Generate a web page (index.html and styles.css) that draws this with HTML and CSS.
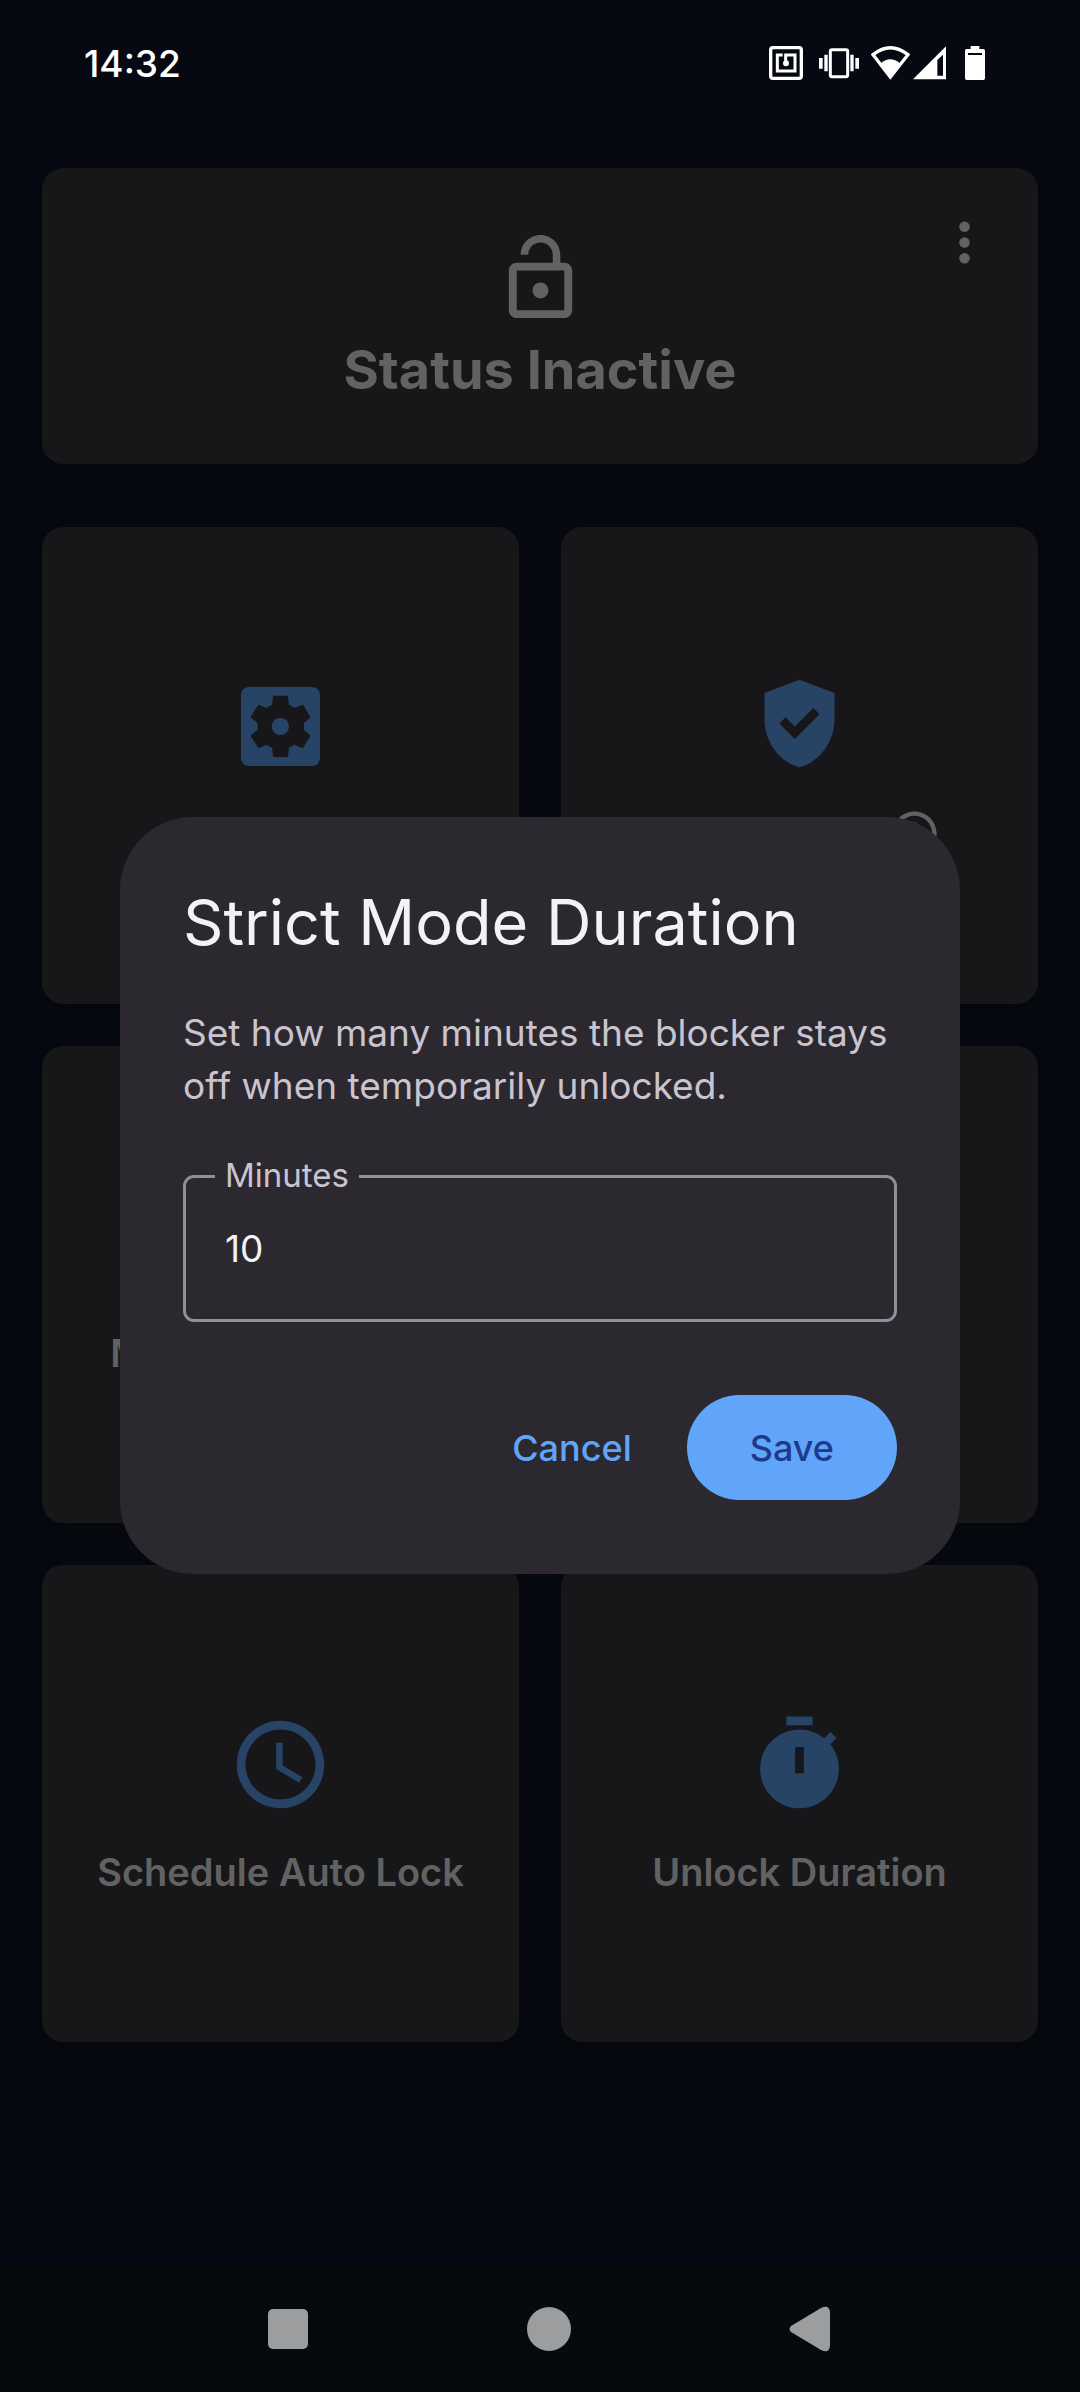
FILE: index.html
```html
<!DOCTYPE html>
<html lang="en">
<head>
<meta charset="utf-8">
<meta name="viewport" content="width=device-width, initial-scale=1">
<title>Strict Mode Duration</title>
<link rel="stylesheet" href="styles.css">
</head>
<body>
<div class="screen">
  <header class="status-bar">
    <time class="clock">14:32</time>
    <div class="status-icons" aria-hidden="true">
      <svg width="38" height="36" viewBox="87 75 114 108" fill="none" stroke="#fff">
        <rect x="92" y="83" width="92" height="92" rx="7" stroke-width="10"/>
        <path d="M128 105H112V153H165V105H137V127" stroke-width="9"/>
        <circle cx="138" cy="130" r="9" fill="#fff" stroke="none"/>
      </svg>
      <svg width="40" height="36" viewBox="237 75 120 108" fill="#fff">
        <rect x="271" y="89" width="52" height="81" rx="5" fill="none" stroke="#fff" stroke-width="9"/>
        <path d="M237 114h11v32h-11zM253 104h10v50h-10zM331 104h10v50h-10zM346 114h11v32h-11z"/>
      </svg>
      <div class="signal">
        <svg width="39" height="36" viewBox="393 75 117 108">
          <path d="M399 104Q451 62 504 104L451 171Z" fill="none" stroke="#fff" stroke-width="10"/>
          <path d="M422 130Q451 106 480 130L451 176Z" fill="#fff"/>
        </svg>
        <svg width="33" height="36" viewBox="519 75 99 108" fill="#fff">
          <path fill-rule="evenodd" d="M519 178L618 79V178ZM592 120V167H609V104Z"/>
        </svg>
      </div>
      <svg width="27" height="36" viewBox="654 75 81 108" fill="#fff">
        <path fill-rule="evenodd" d="M692 78h26v9h12q5 0 5 5v83q0 5-5 5h-50q-5 0-5-5v-83q0-5 5-5h12zM684 99v6h42v-6z"/>
      </svg>
    </div>
  </header>

  <main class="content">
    <section class="card status-card">
      <svg class="status-icon" viewBox="0 0 24 24" aria-hidden="true"><path d="M12 17c1.1 0 2-.9 2-2s-.9-2-2-2-2 .9-2 2 .9 2 2 2zm6-9h-1V6c0-2.76-2.24-5-5-5S7 3.24 7 6h1.9c0-1.71 1.39-3.1 3.1-3.1 1.71 0 3.1 1.39 3.1 3.1v2H6c-1.1 0-2 .9-2 2v10c0 1.1.9 2 2 2h12c1.1 0 2-.9 2-2V10c0-1.1-.9-2-2-2zm0 12H6V10h12v10z"/></svg>
      <h1 class="status-title">Status Inactive</h1>
      <button class="menu-button" type="button" aria-label="More options">
        <svg viewBox="0 0 24 24"><circle cx="12" cy="6" r="2"/><circle cx="12" cy="12" r="2"/><circle cx="12" cy="18" r="2"/></svg>
      </button>
    </section>

    <div class="tiles">
      <button class="card tile" type="button" aria-label="Settings">
        <svg class="tile-icon" viewBox="0 0 315 315"><path fill-rule="evenodd" d="M65 39H250Q276 39 276 65V250Q276 276 250 276H65Q39 276 39 250V65Q39 39 65 39ZM137 65Q135 65 135 67L132 92 115 102 94 93Q91 92 90 94L69 127Q67 130 70 132L89 147V167L70 182Q67 185 69 188L90 220Q91 223 94 222L115 212 132 221 135 247Q135 249 137 249H178Q180 249 180 247L183 221 200 212 222 222Q225 223 226 220L246 188Q248 185 245 182L228 167V147L245 132Q248 130 246 127L226 94Q225 92 222 93L200 102 183 92 180 67Q180 65 178 65Z"/><circle cx="157" cy="157" r="26"/></svg>
        <span class="tile-label"></span>
      </button>
      <button class="card tile" type="button">
        <svg class="tile-icon" viewBox="0 0 24 24"><path d="M12 2L4 5v6.09c0 5.05 3.41 9.76 8 10.91 4.59-1.15 8-5.86 8-10.91V5l-8-3zm-1.06 13.54L7.4 12l1.41-1.41 2.12 2.12 4.24-4.24 1.41 1.41-5.64 5.66z"/></svg>
        <span class="tile-label">Strict Mode
          <svg class="info-icon" viewBox="0 0 24 24"><path d="M11 7h2v2h-2zm0 4h2v6h-2zm1-9C6.48 2 2 6.48 2 12s4.48 10 10 10 10-4.48 10-10S17.52 2 12 2zm0 18c-4.41 0-8-3.59-8-8s3.59-8 8-8 8 3.59 8 8-3.59 8-8 8z"/></svg>
        </span>
      </button>
      <button class="card tile" type="button">
        <span class="tile-icon"></span>
        <span class="tile-label">Manage Keywords</span>
      </button>
      <button class="card tile" type="button" aria-label="Tile"></button>
      <button class="card tile" type="button">
        <svg class="tile-icon" viewBox="0 0 24 24"><path d="M11.99 2C6.47 2 2 6.48 2 12s4.47 10 9.99 10C17.52 22 22 17.52 22 12S17.52 2 11.99 2zM12 20c-4.42 0-8-3.58-8-8s3.58-8 8-8 8 3.58 8 8-3.58 8-8 8zm.5-13H11v6l5.25 3.15.75-1.23-4.5-2.67z"/></svg>
        <span class="tile-label">Schedule Auto Lock</span>
      </button>
      <button class="card tile" type="button">
        <svg class="tile-icon" viewBox="0 0 24 24"><path d="M9 1h6v2H9zM19.03 7.39l1.42-1.42c-.43-.51-.9-.99-1.41-1.41l-1.42 1.42C16.07 4.74 14.12 4 12 4c-4.97 0-9 4.03-9 9s4.02 9 9 9 9-4.03 9-9c0-2.12-.74-4.07-1.97-5.61zM13 14h-2V8h2v6z"/></svg>
        <span class="tile-label">Unlock Duration</span>
      </button>
    </div>
  </main>

  <nav class="nav-bar">
    <button class="nav-button" type="button" aria-label="Recent apps"><svg width="48" height="48" viewBox="0 0 48 48"><rect x="4" y="4" width="40" height="40" rx="5"/></svg></button>
    <button class="nav-button" type="button" aria-label="Home"><svg width="48" height="48" viewBox="0 0 48 48"><circle cx="24" cy="24" r="22"/></svg></button>
    <button class="nav-button" type="button" aria-label="Back"><svg width="48" height="48" viewBox="0 0 48 48"><path d="M5 21Q2 24 5 27L35 45Q43 49 44 41V7Q43-1 35 3Z"/></svg></button>
  </nav>
</div>

<div class="overlay">
  <form class="dialog" role="dialog" aria-modal="true" aria-labelledby="dialog-title">
    <h2 class="dialog-title" id="dialog-title">Strict Mode Duration</h2>
    <p class="dialog-text">Set how many minutes the blocker stays off when temporarily unlocked.</p>
    <div class="field">
      <label class="field-label" for="minutes">Minutes</label>
      <input class="field-input" id="minutes" type="text" inputmode="numeric" value="10">
    </div>
    <div class="actions">
      <button class="button button-text" type="button">Cancel</button>
      <button class="button button-filled" type="submit">Save</button>
    </div>
  </form>
</div>
</body>
</html>
```
FILE: styles.css
```css
:root {
  --background: #060911;
  --card: #171719;
  --muted: #626262;
  --tile-accent: #274365;
  --surface: #2b292f;
  --accent: #60a5fa;
}

* {
  box-sizing: border-box;
}

body {
  margin: 0;
  background: var(--background);
  color: #fff;
  font-family: Inter, Roboto, sans-serif;
  font-size: 37px;
}

button,
input {
  font: inherit;
  margin: 0;
}

button {
  border: 0;
  padding: 0;
  background: none;
}

svg {
  display: block;
}

h1,
h2,
p {
  margin: 0;
}

.screen {
  display: flex;
  flex-direction: column;
  min-height: 100vh;
}

.status-bar {
  display: flex;
  align-items: center;
  justify-content: space-between;
  height: 126px;
  padding: 0 95px 0 84px;
}

.clock {
  font-weight: 500;
}

.status-icons {
  display: flex;
  gap: 12px;
}

.signal {
  display: flex;
  gap: 3px;
}

.content {
  display: flex;
  flex-direction: column;
  gap: 63px;
  padding: 42px;
}

.card {
  border-radius: 21px;
  background: var(--card);
  color: var(--muted);
  box-shadow: 0 4px 16px rgba(6, 8, 10, 0.9);
}

.status-card {
  position: relative;
  display: flex;
  flex-direction: column;
  align-items: center;
  gap: 12px;
  padding: 63px;
}

.status-icon {
  width: 95px;
  height: 95px;
  fill: currentColor;
}

.status-title {
  font-size: 54px;
  line-height: 63px;
  font-weight: 700;
}

.menu-button {
  position: absolute;
  top: 11px;
  right: 10px;
  padding: 32px;
  color: inherit;
}

.menu-button svg {
  width: 63px;
  height: 63px;
  fill: currentColor;
}

.tiles {
  display: grid;
  grid-template-columns: 1fr 1fr;
  gap: 42px;
}

.tile {
  display: flex;
  flex-direction: column;
  align-items: center;
  justify-content: center;
  gap: 31px;
  aspect-ratio: 1;
}

.tile-icon {
  width: 105px;
  height: 105px;
  fill: var(--tile-accent);
}

.tile-label {
  display: flex;
  align-items: center;
  gap: 16px;
  min-height: 48px;
  font-size: 38px;
  line-height: 48px;
  font-weight: 600;
}

.info-icon {
  width: 53px;
  height: 53px;
  fill: currentColor;
}

.nav-bar {
  display: flex;
  align-items: center;
  justify-content: center;
  gap: 213px;
  height: 126px;
  margin-top: auto;
  padding-left: 17px;
  background: #060a0c;
}

.nav-button svg {
  fill: #9c9d9f;
}

.overlay {
  position: fixed;
  inset: 0;
  display: flex;
  align-items: center;
  justify-content: center;
  padding: 0 120px 2px;
}

.dialog {
  width: 100%;
  padding: 63px;
  border-radius: 73px;
  background: var(--surface);
}

.dialog-title {
  margin-bottom: 42px;
  color: #f3f3f6;
  font-size: 63px;
  line-height: 84px;
  font-weight: 400;
}

.dialog-text {
  margin-bottom: 63px;
  color: #cac4d0;
  line-height: 53px;
}

.field {
  position: relative;
  margin-bottom: 63px;
}

.field-label {
  position: absolute;
  top: -21px;
  left: 32px;
  padding: 0 10px;
  background: var(--surface);
  color: #cac4d0;
  font-size: 33px;
  line-height: 42px;
}

.field-input {
  display: block;
  width: 100%;
  height: 147px;
  padding: 0 39px;
  border: 3px solid #938f99;
  border-radius: 11px;
  outline: 0;
  background: none;
  color: #f3f3f6;
}

.actions {
  display: flex;
  align-items: center;
  justify-content: flex-end;
  gap: 21px;
  height: 126px;
}

.button {
  height: 105px;
  border-radius: 53px;
  font-size: 36px;
  font-weight: 500;
}

.button-text {
  padding: 0 34px;
  color: var(--accent);
}

.button-filled {
  padding: 0 63px;
  background: var(--accent);
  color: #1e3a8a;
}
```
